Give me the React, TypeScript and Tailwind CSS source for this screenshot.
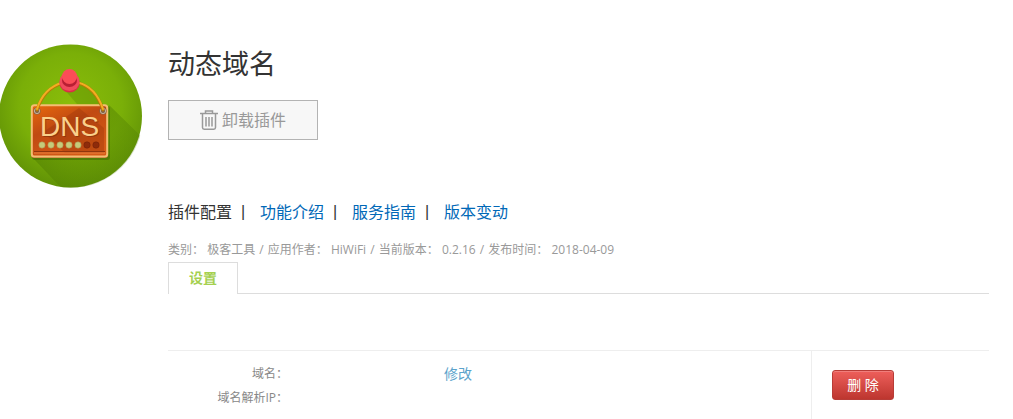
import React from 'react';

const navItems = [
  { label: '插件配置', href: '#config', active: true },
  { label: '功能介绍', href: '#intro', active: false },
  { label: '服务指南', href: '#guide', active: false },
  { label: '版本变动', href: '#changelog', active: false },
];

const metaItems = [
  { label: '类别', value: '极客工具' },
  { label: '应用作者', value: 'HiWiFi' },
  { label: '当前版本', value: '0.2.16' },
  { label: '发布时间', value: '2018-04-09' },
];

const DnsLogo: React.FC<{ className?: string }> = ({ className }) => (
  <svg viewBox="0 0 144 144" className={className} role="img" aria-label="DNS">
    <defs>
      <radialGradient id="disc" cx="0.5" cy="0.42" r="0.6">
        <stop offset="0" stopColor="#8abd0a" />
        <stop offset="0.6" stopColor="#7aaf08" />
        <stop offset="1" stopColor="#5f9006" />
      </radialGradient>
      <linearGradient id="board" x1="0" y1="0" x2="0.6" y2="1">
        <stop offset="0" stopColor="#e8690d" />
        <stop offset="0.45" stopColor="#c04a12" />
        <stop offset="1" stopColor="#d55a16" />
      </linearGradient>
      <linearGradient id="shade" x1="0" y1="0" x2="1" y2="1">
        <stop offset="0" stopColor="#3f6a00" stopOpacity="0.5" />
        <stop offset="1" stopColor="#4f7d00" stopOpacity="0.1" />
      </linearGradient>
      <clipPath id="discClip">
        <circle cx="72" cy="72" r="72" />
      </clipPath>
    </defs>
    <circle cx="71.500" cy="72" r="71.500" fill="url(#disc)" />
    <g clipPath="url(#discClip)">
      <path d="M110 61 L150 100 L150 150 L68 150 L33 113 L110 112 Z" fill="url(#shade)" />
      <path d="M64 44 L79 35 L104 60 L78 60 Z" fill="#4f7d00" opacity="0.3" />
    </g>
    {/* hanging board */}
    <rect x="33" y="62" width="78" height="54" rx="3" fill="#3d5f05" opacity="0.5" />
    <rect x="32" y="61" width="77" height="53" rx="3" fill="#b56a2c" />
    <rect x="32.8" y="61.2" width="75.4" height="51.4" rx="2.5" fill="url(#board)" stroke="#f4bd73" strokeWidth="2" />
    <path d="M44 88 L66 109 L105 109 L105 84 L80 64 Z" fill="#8f2f0a" opacity="0.3" />
    <path d="M35 107.5 H106" stroke="#8e350d" strokeWidth="1" />
    <path d="M35 109 H106" stroke="#ec8440" strokeWidth="1" />
    {/* cord and its rivets */}
    <circle cx="38" cy="67" r="3.6" fill="#7f624a" />
    <circle cx="104" cy="67" r="3.6" fill="#7f624a" />
    <circle cx="38" cy="67" r="2.6" fill="none" stroke="#cbb39a" strokeWidth="1" />
    <circle cx="104" cy="67" r="2.6" fill="none" stroke="#cbb39a" strokeWidth="1" />
    <path d="M38 66 C43 50 53 42 64 39 M79 39 C91 42 99 51 104 66" fill="none" stroke="#b87806" strokeWidth="3" strokeLinecap="round" />
    <path d="M38 65 C43 49 53 41.5 64 38.5 M79 38.5 C91 41.5 99 50 104 65" fill="none" stroke="#f3ad22" strokeWidth="2" strokeLinecap="round" />
    {/* push pin */}
    <ellipse cx="70.5" cy="39" rx="10" ry="9.5" fill="#d92f45" />
    <ellipse cx="70.5" cy="37.5" rx="10" ry="9.5" fill="#f14a5c" />
    <ellipse cx="70.5" cy="36.5" rx="7.5" ry="6.5" fill="#b91e33" />
    <ellipse cx="70.5" cy="32.5" rx="7.5" ry="7.5" fill="#fb4d57" />
    {/* lettering */}
    <text x="42" y="93" fontSize="28" fontFamily="Liberation Sans, Arial, sans-serif" fill="#7c2f08" fillOpacity="0.6">DNS</text>
    <text x="41" y="92" fontSize="28" fontFamily="Liberation Sans, Arial, sans-serif" fill="#fad08b">DNS</text>
    {[43, 52, 61, 70, 79].map((x) => (
      <circle key={x} cx={x} cy="101" r="3.2" fill="#c5cb7b" stroke="#a88a48" strokeWidth="0.5" />
    ))}
    {[88, 97].map((x) => (
      <circle key={x} cx={x} cy="101" r="3.2" fill="#8e2b0a" stroke="#702006" strokeWidth="0.5" />
    ))}
  </svg>
);

const TrashIcon: React.FC<{ className?: string }> = ({ className }) => (
  <svg viewBox="0 0 18 20" className={className} fill="none" stroke="#999999" strokeWidth="1.5" aria-hidden="true">
    <path d="M0 3.5 H18" />
    <path d="M5.5 3.5 V1 H12.5 V3.5" />
    <path d="M2.5 3.5 V17.5 Q2.5 19.2 4.2 19.2 H13.800 Q15.5 19.2 15.5 17.5 V3.5" />
    <path d="M6 7 V16.5 M9 7 V16.5 M12 7 V16.5" />
  </svg>
);

const DomainRow: React.FC<{ label: string; children?: React.ReactNode }> = ({ label, children }) => (
  <div className="flex h-6 items-center">
    <dt className="w-[120px] shrink-0 text-right text-xs text-[#888888]">{label}：</dt>
    <dd className="pl-[156px] text-sm">{children}</dd>
  </div>
);

export default function App() {
  return (
    <div className="flex items-start gap-[25px] bg-white pt-11 pr-6 font-['Open_Sans','Noto_Sans_CJK_SC',sans-serif] text-[#333333]">
      <DnsLogo className="-ml-px size-36 shrink-0" />

      <main className="min-w-0 flex-1">
        <h1 className="text-[27px] leading-10">动态域名</h1>

        <button
          type="button"
          className="mt-4 flex h-10 w-[150px] items-center justify-center gap-1 border border-[#b3b3b3] bg-[#f7f7f7] text-base text-[#999999]"
        >
          <TrashIcon className="h-5 w-[18px]" />
          卸载插件
        </button>

        <nav className="mt-15 flex h-6 items-center text-base">
          {navItems.map((item, i) => (
            <React.Fragment key={item.href}>
              {i > 0 && <span className="w-7 pl-[9px] font-['Liberation_Sans'] text-base">|</span>}
              <a href={item.href} className={item.active ? 'text-[#333333]' : 'text-[#0068b7]'}>
                {item.label}
              </a>
            </React.Fragment>
          ))}
        </nav>

        <p className="mt-4 h-5 text-xs leading-5 text-[#999999]">
          {metaItems.map((item, i) => (
            <React.Fragment key={item.label}>
              {i > 0 && <span className="mx-px"> / </span>}
              {item.label}： {item.value}
            </React.Fragment>
          ))}
        </p>

        <div role="tablist" className="mt-0.5 flex h-8">
          <button
            type="button"
            role="tab"
            aria-selected="true"
            className="w-[70px] border border-b-0 border-[#dddddd] pb-0.5 text-sm font-bold text-[#a5d04f]"
          >
            设置
          </button>
          <div className="flex-1 border-b border-[#dddddd]" />
        </div>

        <section className="mt-14 flex border-t border-[#eeeeee]">
          <dl className="flex-1 pt-[11px] pb-[9px]">
            <DomainRow label="域名">
              <a href="#edit" className="text-[#5ba3cb]">修改</a>
            </DomainRow>
            <DomainRow label="域名解析IP" />
          </dl>
          <div className="w-[178px] border-l border-[#eeeeee] pt-[19px] pl-5">
            <button
              type="button"
              className="h-[30px] w-[62px] rounded-[3px] border border-[#b83c37] bg-linear-to-b from-[#ee5f5b] to-[#bd362f] text-sm text-white shadow-[inset_0_1px_0_rgba(255,255,255,0.2)]"
            >
              删 除
            </button>
          </div>
        </section>
      </main>
    </div>
  );
}
